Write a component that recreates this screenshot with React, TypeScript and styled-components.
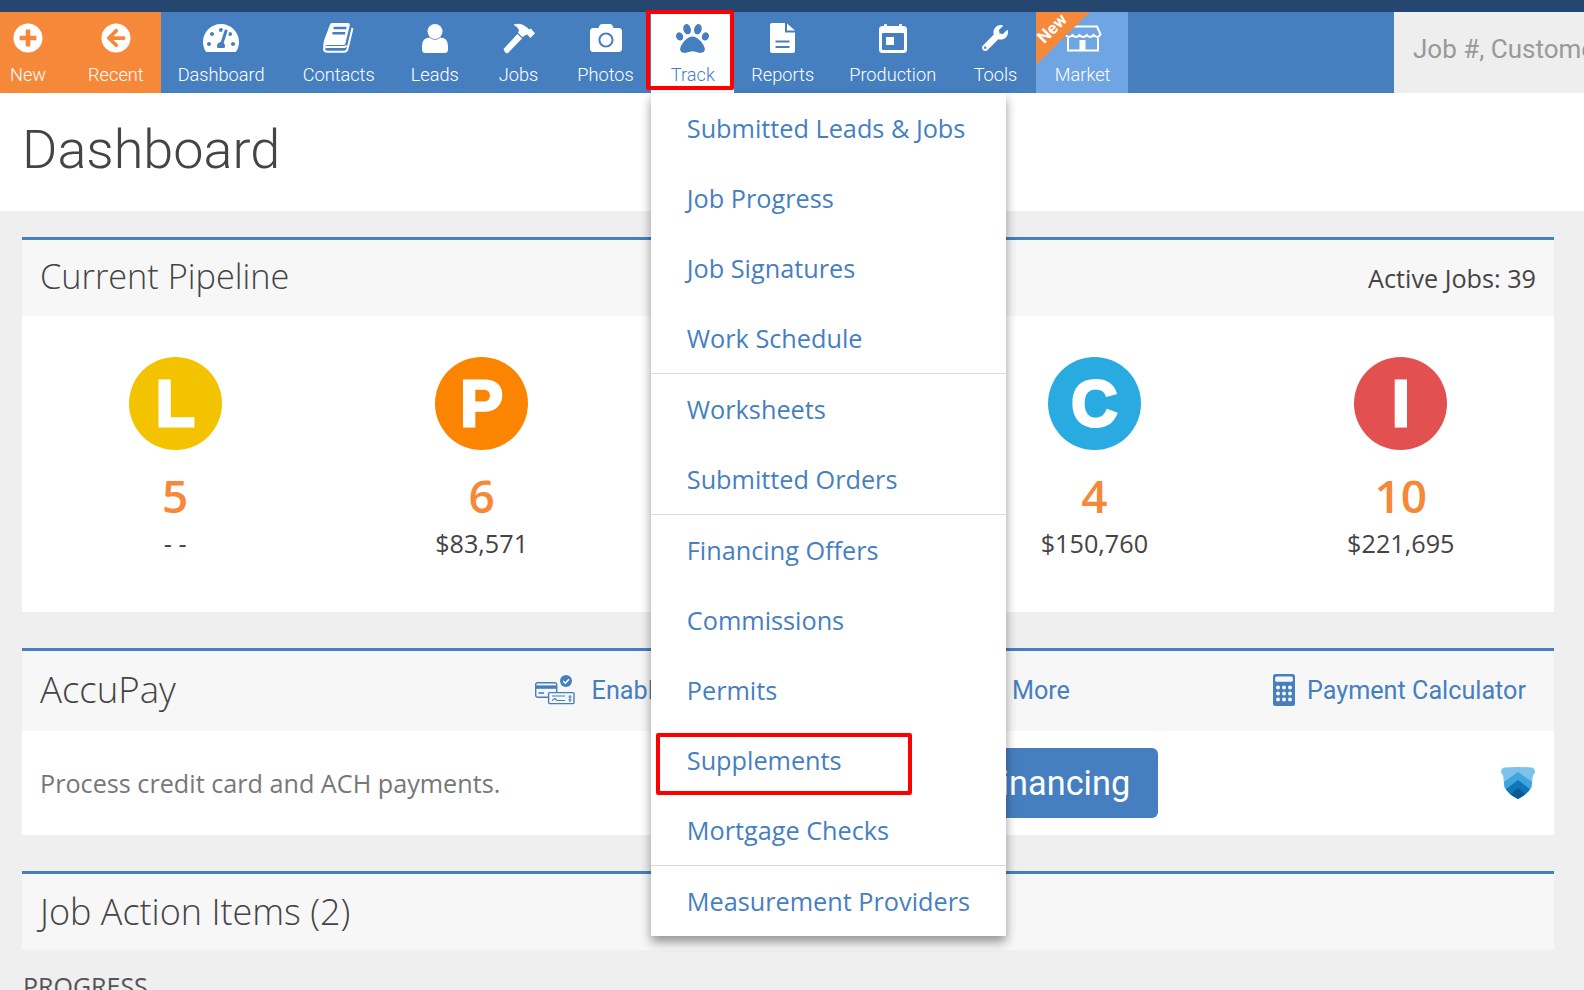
import React from "react";
import styled, { createGlobalStyle } from "styled-components";
import {
  FaArrowCircleLeft,
  FaCamera,
  FaPaw,
  FaPlusCircle,
  FaTachometerAlt,
  FaWrench,
} from "react-icons/fa";

const BLUE = "#467fbf";
const ORANGE = "#f6883a";

const GlobalStyle = createGlobalStyle`
  html, body {
    margin: 0;
    height: 100%;
    overflow: hidden;
    background: #efefef;
    font-family: "Open Sans", sans-serif;
  }
  * { box-sizing: border-box; }
`;

function BookIcon() {
  return (
    <svg width="31" height="30" viewBox="0 0 31 30">
      <path
        fill="#fff"
        d="M7 1.6Q7.4 0 9 0H25Q27.2 0 26.8 2L22.4 20.4Q22 22 20.4 22H5Q2 22 1.6 24L0.2 25Q0 21 1.2 17Z"
      />
      <path fill="none" stroke="#fff" strokeWidth="2" d="M29.5 5L24.6 25.6Q24 28.8 21 28.8H4.5Q1 28.8 1 26Q1 24 4.5 24H21.4Q22.8 24 23.4 22.4" />
      <path fill="none" stroke={BLUE} strokeWidth="2.6" d="M10.6 5H23.4M9.4 10.2H22.2" />
    </svg>
  );
}

function UserIcon() {
  return (
    <svg width="26" height="29" viewBox="0 0 26 29">
      <circle cx="13" cy="7.5" r="7.5" fill="#fff" />
      <path
        fill="#fff"
        d="M0 22Q0 14 7.5 13.6Q13 18 18.5 13.6Q26 14 26 22V25.5Q26 29 22.5 29H3.5Q0 29 0 25.5Z"
      />
    </svg>
  );
}

function HammerIcon() {
  return (
    <svg width="32" height="31" viewBox="0 0 32 31">
      <path fill="#fff" d="M0.5 26L14.4 11L19 15.4L5 30Q3.6 31 2.2 29.6Z" />
      <path
        fill="#fff"
        d="M11 1.4Q18 -1 24 4.6L26 6.4L27.8 5.4L32 10.2L27.4 15L24.4 11.4L21.8 12.4L19.4 14.2L15 9.8L16 7.8Q15 4 11 2.2Z"
      />
    </svg>
  );
}

function ReportIcon() {
  return (
    <svg width="25" height="30" viewBox="0 0 25 30">
      <path fill="#fff" d="M2 0H15V9.5H25V28Q25 30 23 30H2Q0 30 0 28V2Q0 0 2 0Z" />
      <path fill="#fff" d="M17 0.4L25 7.5H17Z" />
      <path fill="none" stroke={BLUE} strokeWidth="2.2" d="M5.5 18.5H19.5M5.5 24H19.5" />
    </svg>
  );
}

function CalendarIcon() {
  return (
    <svg width="28" height="29" viewBox="0 0 28 29">
      <rect y="2" width="28" height="27" rx="3.5" fill="#fff" />
      <rect x="5" width="3" height="5" rx="1" fill="#fff" />
      <rect x="20" width="3" height="5" rx="1" fill="#fff" />
      <rect x="3" y="9" width="22" height="17" rx="1" fill={BLUE} />
      <rect x="7" y="13" width="8" height="8" fill="#fff" />
    </svg>
  );
}

function StoreIcon() {
  return (
    <svg width="38" height="27" viewBox="0 0 38 27" fill="none" stroke="#fff" strokeWidth="2">
      <path d="M5 1.5H33L36.5 9.5Q34 14 29.5 10Q26 14 23 10Q19 14 15.5 10Q12 14 8.5 10Q4 14 1.5 9.5Z" />
      <path d="M4 13V25.5H34V13" />
      <rect x="15.5" y="15" width="6" height="10" fill="#fff" stroke="none" />
    </svg>
  );
}

function CardCheckIcon() {
  return (
    <svg width="40" height="30" viewBox="0 0 40 30" fill="none" stroke={BLUE}>
      <rect x="0.7" y="7.7" width="21" height="14.6" rx="2" strokeWidth="1.4" />
      <rect x="1" y="10.4" width="20" height="3.4" fill={BLUE} stroke="none" />
      <path d="M3.5 18H9" strokeWidth="1.6" />
      <rect x="13.6" y="17.6" width="25.4" height="11" rx="1" fill="#f7f7f7" strokeWidth="1.4" />
      <path d="M17 21H30M17 25.5L20 23.5L22 25.5H30M35 20V27M33.4 22H36.6M33.4 25H36.6" strokeWidth="1.1" />
      <circle cx="31" cy="6" r="6" fill={BLUE} stroke="none" />
      <path d="M28.2 6L30.3 8.2L34 4.2" stroke="#fff" strokeWidth="1.6" />
    </svg>
  );
}

function CalculatorIcon() {
  const columns = [5, 11, 17];
  const rows = [13.5, 19.5, 25.5];
  return (
    <svg width="22" height="32" viewBox="0 0 22 32">
      <rect width="22" height="32" rx="2.5" fill={BLUE} />
      <rect x="2.2" y="2.6" width="17.6" height="5.2" rx="1.5" fill="#f7f7f7" />
      {rows.map((y) =>
        columns.map((x) => <circle key={`${x}-${y}`} cx={x} cy={y} r="2" fill="#f7f7f7" />)
      )}
    </svg>
  );
}

function ShieldLogo() {
  return (
    <svg width="34" height="32" viewBox="0 0 34 32">
      <clipPath id="shield-clip">
        <path d="M3 0.6Q17 -0.6 31 0.6Q34 2 34 5Q34 7 32 8L30.5 20Q27 27 17 32Q7 27 3.5 20L2 8Q0 7 0 5Q0 2 3 0.6Z" />
      </clipPath>
      <g clipPath="url(#shield-clip)">
        <rect width="34" height="32" fill="#7cc3ec" />
        <path d="M17 5L34 17V32H0V17Z" fill="#3fa5dd" />
        <path d="M17 13L34 26V32H0V26Z" fill="#0f77b8" />
        <path d="M17 21L30 32H4Z" fill="#0b5a97" />
      </g>
    </svg>
  );
}

type NavEntry = { label: string; icon: React.ReactNode; left?: number; right?: number };

const leftItems: NavEntry[] = [
  { label: "Dashboard", icon: <FaTachometerAlt size={36} color="#fff" />, left: 17, right: 20 },
  { label: "Contacts", icon: <BookIcon /> },
  { label: "Leads", icon: <UserIcon /> },
  { label: "Jobs", icon: <HammerIcon />, left: 22 },
  { label: "Photos", icon: <FaCamera size={32} color="#fff" />, left: 21, right: 17 },
];

const rightItems: NavEntry[] = [
  { label: "Reports", icon: <ReportIcon />, left: 17.5 },
  { label: "Production", icon: <CalendarIcon />, left: 17 },
  { label: "Tools", icon: <FaWrench size={26} color="#fff" />, left: 19.5, right: 18.5 },
];

const menuGroups = [
  ["Submitted Leads & Jobs", "Job Progress", "Job Signatures", "Work Schedule"],
  ["Worksheets", "Submitted Orders"],
  ["Financing Offers", "Commissions", "Permits", "Supplements", "Mortgage Checks"],
  ["Measurement Providers"],
];

// the middle stage sits behind the open menu, so it has nothing to show
const stages = [
  { letter: "L", color: "#f4c300", count: "5", amount: "- -" },
  { letter: "P", color: "#fb8500", count: "6", amount: "$83,571" },
  null,
  { letter: "C", color: "#29abe2", count: "4", amount: "$150,760" },
  { letter: "I", color: "#e25050", count: "10", amount: "$221,695" },
];

export default function App() {
  return (
    <>
      <GlobalStyle />
      <TopStrip />
      <NavBar>
        <NavItem $tone="orange" $left={10} $right={24}>
          <IconSlot><FaPlusCircle size={30} color="#fff" /></IconSlot>
          <NavLabel>New</NavLabel>
        </NavItem>
        <NavItem $tone="orange" $left={18} $right={17}>
          <IconSlot><FaArrowCircleLeft size={30} color="#fff" /></IconSlot>
          <NavLabel>Recent</NavLabel>
        </NavItem>
        {leftItems.map((item) => (
          <NavItem key={item.label} $left={item.left} $right={item.right}>
            <IconSlot>{item.icon}</IconSlot>
            <NavLabel>{item.label}</NavLabel>
          </NavItem>
        ))}
        <NavItem $tone="active" $left={20} $right={19}>
          <IconSlot><FaPaw size={33} color={BLUE} /></IconSlot>
          <NavLabel>Track</NavLabel>
          <TrackHighlight />
          <Dropdown>
            {menuGroups.map((group) => (
              <MenuGroup key={group[0]}>
                {group.map((entry) => (
                  <MenuLink key={entry} href="#">
                    {entry}
                    {entry === "Supplements" && <SupplementsHighlight />}
                  </MenuLink>
                ))}
              </MenuGroup>
            ))}
          </Dropdown>
        </NavItem>
        {rightItems.map((item) => (
          <NavItem key={item.label} $left={item.left} $right={item.right}>
            <IconSlot>{item.icon}</IconSlot>
            <NavLabel>{item.label}</NavLabel>
          </NavItem>
        ))}
        <NavItem $tone="market" $left={19} $right={18}>
          <IconSlot><StoreIcon /></IconSlot>
          <NavLabel>Market</NavLabel>
          <Ribbon />
          <RibbonText>New</RibbonText>
        </NavItem>
        <NavSpacer />
        <SearchBox placeholder="Job #, Customer, Address" />
      </NavBar>

      <PageHeader>
        <PageTitle>Dashboard</PageTitle>
      </PageHeader>

      <Content>
        <Card>
          <CardHeader $height={76}>
            <PipelineTitle $size={34.3}>Current Pipeline</PipelineTitle>
            <ActiveJobs>Active Jobs: 39</ActiveJobs>
          </CardHeader>
          <Pipeline>
            {stages.map((stage, index) =>
              stage ? (
                <Stage key={stage.letter}>
                  <StageCircle $color={stage.color}>{stage.letter}</StageCircle>
                  <StageCount>{stage.count}</StageCount>
                  <StageAmount>{stage.amount}</StageAmount>
                </Stage>
              ) : (
                <Stage key={index} />
              )
            )}
          </Pipeline>
        </Card>

        <Card>
          <CardHeader $height={80}>
            <CardTitle $size={36.6}>AccuPay</CardTitle>
            <HeaderLinks>
              <EnableLink href="#">
                <CardCheckIcon />
                <EnableLabel>Enable Now</EnableLabel>
              </EnableLink>
              <HeaderLink href="#">Learn More</HeaderLink>
              <HeaderLink href="#">
                <CalculatorIcon />
                Payment Calculator
              </HeaderLink>
            </HeaderLinks>
          </CardHeader>
          <AccuPayBody>
            <AccuPayText>Process credit card and ACH payments.</AccuPayText>
            <FinancingButton>Offer Financing</FinancingButton>
            <ShieldLogo />
          </AccuPayBody>
        </Card>

        <Card>
          <CardHeader $height={76}>
            <ActionTitle $size={36}>Job Action Items (2)</ActionTitle>
          </CardHeader>
        </Card>
        <SectionLabel>PROGRESS</SectionLabel>
      </Content>
    </>
  );
}

const TopStrip = styled.div`
  height: 12px;
  background: #25476f;
`;

const NavBar = styled.nav`
  height: 81px;
  display: flex;
  background: ${BLUE};
`;

const toneBackground = {
  blue: "transparent",
  orange: ORANGE,
  active: "#fff",
  market: "#70a5e3",
};

const NavItem = styled.div<{
  $tone?: keyof typeof toneBackground;
  $left?: number;
  $right?: number;
}>`
  position: relative;
  display: flex;
  flex-direction: column;
  align-items: center;
  padding: 5px ${(p) => p.$right ?? 18}px 0 ${(p) => p.$left ?? 18}px;
  background: ${(p) => toneBackground[p.$tone ?? "blue"]};
  color: ${(p) => (p.$tone === "active" ? BLUE : "#fff")};
`;

const IconSlot = styled.div`
  height: 42px;
  display: flex;
  align-items: center;
  justify-content: center;
`;

const NavLabel = styled.span`
  margin-top: 4px;
  font-family: Roboto, sans-serif;
  font-weight: 300;
  font-size: 18.2px;
  line-height: 24px;
  white-space: nowrap;
`;

const TrackHighlight = styled.div`
  position: absolute;
  top: -2px;
  left: -5px;
  right: 0;
  bottom: 3px;
  border: 4px solid #ff0000;
  border-radius: 2px;
`;

const Dropdown = styled.div`
  position: absolute;
  z-index: 5;
  top: 81px;
  left: 0;
  width: 355px;
  background: #fff;
  box-shadow: 0 6px 10px rgba(0, 0, 0, 0.4);
`;

const MenuGroup = styled.div`
  border-bottom: 1px solid #dcdcdc;

  &:last-child {
    border-bottom: none;
  }
`;

const MenuLink = styled.a`
  position: relative;
  display: block;
  height: 70px;
  padding-left: 36px;
  font-size: 25.25px;
  line-height: 71px;
  color: ${BLUE};
  text-decoration: none;
`;

const SupplementsHighlight = styled.span`
  position: absolute;
  top: 8px;
  left: 5px;
  width: 256px;
  height: 62px;
  border: 4px solid #ff0000;
  border-radius: 2px;
`;

const Ribbon = styled.div`
  position: absolute;
  top: 0;
  left: 0;
  width: 54px;
  height: 53px;
  background: ${ORANGE};
  clip-path: polygon(0 0, 100% 0, 0 100%);
`;

const RibbonText = styled.span`
  position: absolute;
  top: 4px;
  left: -1px;
  font-family: Roboto, sans-serif;
  font-weight: 700;
  font-size: 17px;
  line-height: 24px;
  color: #fff;
  transform: rotate(-45deg);
`;

const NavSpacer = styled.div`
  flex: 1;
`;

const SearchBox = styled.input`
  width: 190px;
  height: 100%;
  padding: 0 0 8px 19px;
  border: none;
  outline: none;
  background: #eee;
  font-family: Roboto, sans-serif;
  font-size: 26px;

  &::placeholder {
    color: #999;
  }
`;

const PageHeader = styled.header`
  height: 118px;
  padding-left: 22px;
  background: #fff;
`;

const PageTitle = styled.h1`
  margin: 0;
  font-family: Roboto, sans-serif;
  font-weight: 300;
  font-size: 54px;
  line-height: 114px;
  color: #444;
`;

const Content = styled.main`
  display: flex;
  flex-direction: column;
  gap: 36px;
  padding: 26px 30px 0 22px;
`;

const Card = styled.section`
  background: #fff;
  border-top: 3px solid ${BLUE};
`;

const CardHeader = styled.div<{ $height: number }>`
  height: ${(p) => p.$height}px;
  display: flex;
  align-items: center;
  justify-content: space-between;
  padding: 0 18px;
  background: #f7f7f7;
`;

const CardTitle = styled.h2<{ $size: number }>`
  margin: 0 0 4px;
  font-weight: 300;
  font-size: ${(p) => p.$size}px;
  color: #444;
`;

const PipelineTitle = styled(CardTitle)`
  margin-bottom: 6px;
`;

const ActionTitle = styled(CardTitle)`
  margin: 0 0 2px;
`;

const ActiveJobs = styled.span`
  font-size: 25.2px;
  color: #444;
`;

const Pipeline = styled.div`
  height: 296px;
  padding-top: 41px;
  display: grid;
  grid-template-columns: repeat(5, 1fr);
`;

const Stage = styled.div`
  display: flex;
  flex-direction: column;
  align-items: center;
`;

const StageCircle = styled.div<{ $color: string }>`
  width: 93px;
  height: 93px;
  display: flex;
  align-items: center;
  justify-content: center;
  border-radius: 50%;
  background: ${(p) => p.$color};
  font-family: "Liberation Sans", sans-serif;
  font-weight: 700;
  font-size: 64px;
  color: #fff;
  -webkit-text-stroke: 3px #fff;
`;

const StageCount = styled.div`
  margin-top: 15px;
  font-weight: 600;
  font-size: 46px;
  line-height: 60px;
  color: ${ORANGE};
`;

const StageAmount = styled.div`
  margin-top: 1px;
  font-size: 25.2px;
  line-height: 34px;
  color: #444;
`;

const HeaderLinks = styled.div`
  display: flex;
  align-items: center;
  gap: 203px;
  margin: 0 10px 2px 0;
`;

const HeaderLink = styled.a`
  display: flex;
  align-items: center;
  gap: 12px;
  font-family: Roboto, sans-serif;
  font-size: 25.2px;
  color: ${BLUE};
  text-decoration: none;
  white-space: nowrap;
`;

const EnableLink = styled(HeaderLink)`
  margin-right: 15px;
`;

const EnableLabel = styled.span`
  margin-left: 5px;
`;

const AccuPayBody = styled.div`
  height: 104px;
  display: flex;
  align-items: center;
  justify-content: space-between;
  padding: 0 19px 0 18px;
`;

const AccuPayText = styled.p`
  margin: 0;
  font-size: 25.2px;
  color: #777;
`;

const FinancingButton = styled.button`
  width: 315px;
  height: 70px;
  padding: 0 28px 0 0;
  border: none;
  border-radius: 6px;
  background: ${BLUE};
  font-family: Roboto, sans-serif;
  font-size: 34.3px;
  color: #fff;
  text-align: right;
`;

const SectionLabel = styled.div`
  margin-top: -17px;
  padding-left: 1px;
  font-size: 25px;
  color: #555;
`;
